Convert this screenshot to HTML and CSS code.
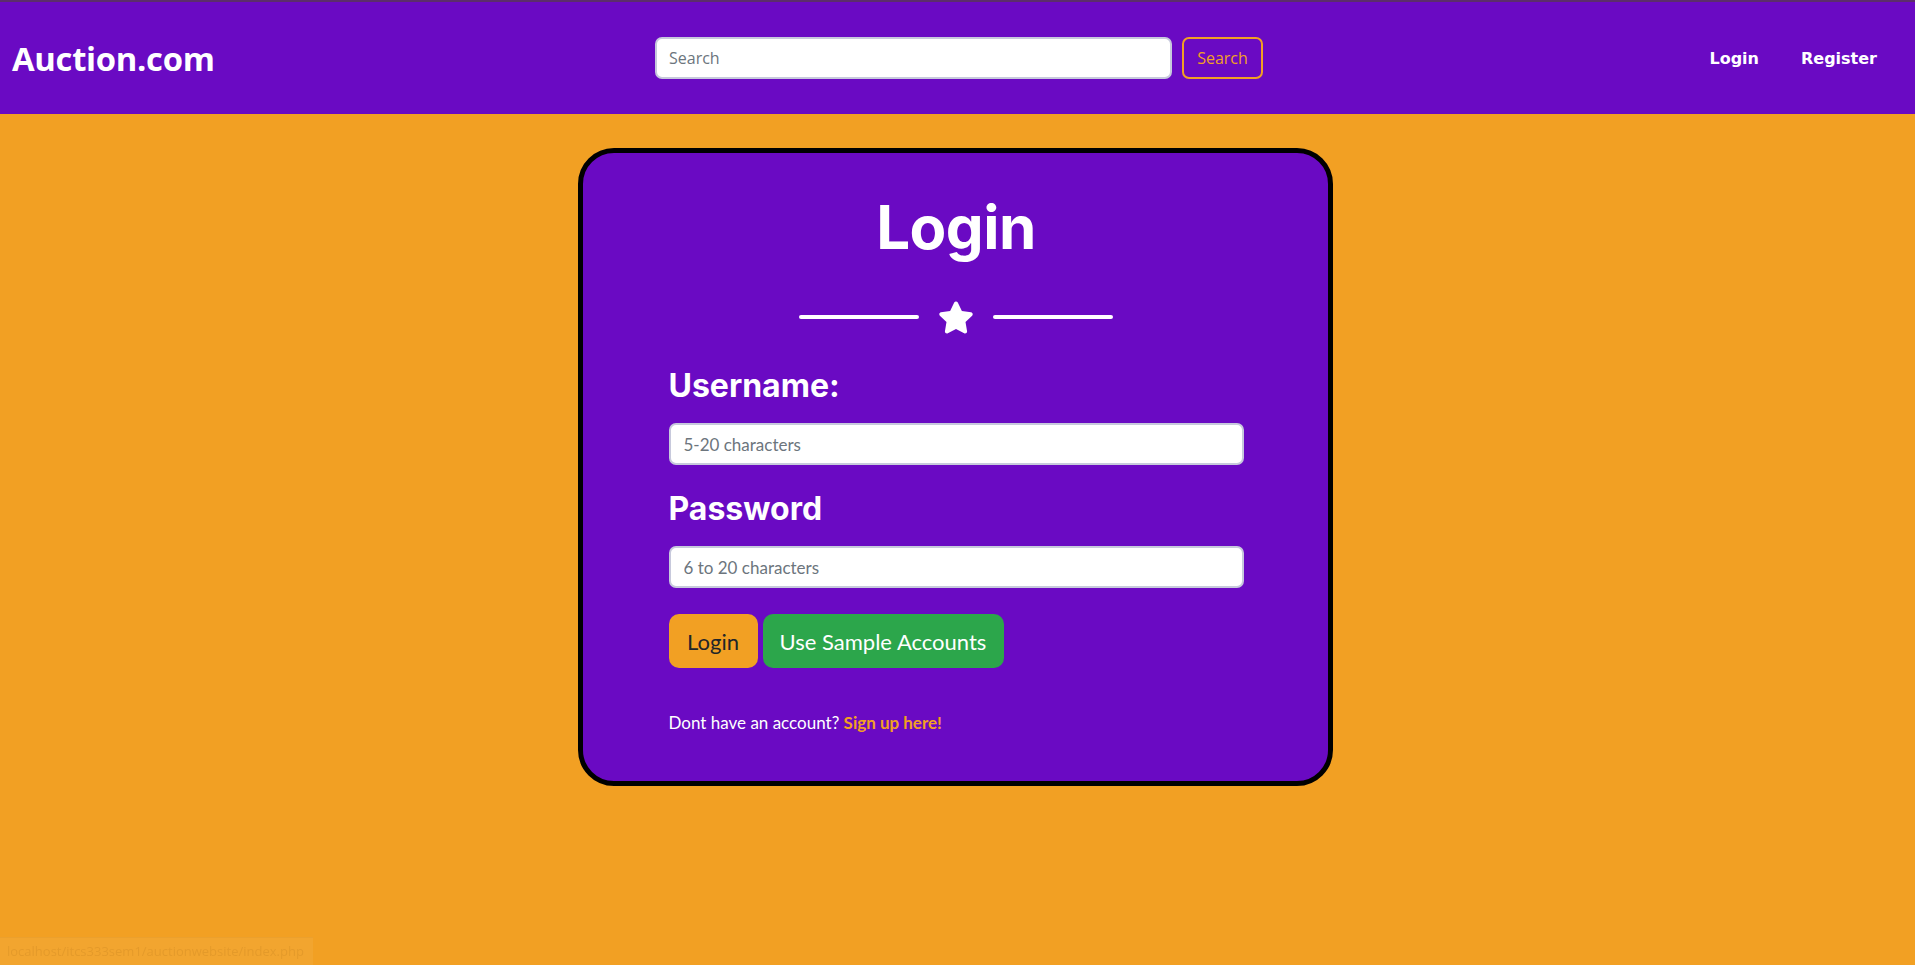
FILE: index.html
```html
<!DOCTYPE html>
<html lang="en">
<head>
<meta charset="utf-8">
<title>Login - Auction.com</title>
<link rel="stylesheet" href="styles.css">
</head>
<body>
<nav class="navbar">
  <a class="brand" href="#">Auction.com</a>
  <form class="search">
    <input class="search-input" type="text" placeholder="Search">
    <button class="search-btn" type="button">Search</button>
  </form>
  <div class="nav-links">
    <a href="#">Login</a>
    <a href="#">Register</a>
  </div>
</nav>

<main class="page">
  <section class="card">
    <h1 class="title">Login</h1>
    <div class="divider">
      <span class="line"></span>
      <svg class="star" viewBox="0 0 576 512" width="36" height="33"><path fill="#fff" d="M259.3 17.8L194 150.2 47.9 171.5c-26.2 3.8-36.7 36.1-17.7 54.6l105.7 103-25 145.5c-4.5 26.3 23.2 46 46.4 33.7L288 439.6l130.7 68.7c23.2 12.2 50.9-7.4 46.4-33.7l-25-145.5 105.7-103c19-18.5 8.5-50.8-17.7-54.6L382 150.2 316.7 17.8c-11.7-23.6-45.6-23.9-57.4 0z"/></svg>
      <span class="line"></span>
    </div>
    <form class="form">
      <label class="label" for="u">Username:</label>
      <input class="field" id="u" type="text" placeholder="5-20 characters">
      <label class="label" for="p">Password</label>
      <input class="field" id="p" type="password" placeholder="6 to 20 characters">
      <div class="actions">
        <button class="btn btn-orange" type="button">Login</button>
        <button class="btn btn-green" type="button">Use Sample Accounts</button>
      </div>
      <p class="signup">Dont have an account? <a href="#">Sign up here!</a></p>
    </form>
  </section>
</main>

<div class="status">localhost/itcs333sem1/auctionwebsite/index.php</div>
</body>
</html>
```

FILE: styles.css
```css
* { box-sizing: border-box; }
html, body { height: 100%; }
body {
  margin: 0;
  background: #f2a023;
  font-family: Lato, "Open Sans", sans-serif;
  color: #fff;
}
.navbar {
  height: 114px;
  background: #6a0ac3;
  border-top: 2px solid #5c2d6b;
  display: grid;
  grid-template-columns: 1fr auto 1fr;
  align-items: center;
  padding: 0 12px;
}
.brand {
  font-family: "Open Sans", sans-serif;
  font-weight: 700;
  font-size: 32.8px;
  color: #fff;
  text-decoration: none;
  justify-self: start;
  letter-spacing: -0.3px;
}
.search {
  display: flex;
  gap: 10px;
  margin: 0 0 0 3px;
}
.search-input {
  width: 517px;
  height: 42px;
  border: 2px solid #c7c9dc;
  border-radius: 7px;
  padding: 0 12px;
  font-family: "Open Sans", sans-serif;
  font-size: 16px;
  color: #495057;
  background: #fff;
  outline: none;
}
.search-input::placeholder { color: #6c757d; }
.search-btn {
  width: 81px;
  height: 42px;
  border: 2px solid #f2a023;
  border-radius: 7px;
  background: transparent;
  color: #f2a023;
  font-family: "Open Sans", sans-serif;
  font-size: 16px;
  padding: 0;
}
.nav-links {
  justify-self: end;
  display: flex;
  gap: 42px;
  margin-right: 26px;
}
.nav-links a {
  font-family: "DejaVu Sans", sans-serif;
  font-weight: 700;
  font-size: 16px;
  color: #fff;
  text-decoration: none;
}
.page {
  display: flex;
  justify-content: center;
  padding: 34px 5px 0 0;
}
.card {
  width: 755px;
  height: 638px;
  background: #6a0ac3;
  border: 5px solid #000;
  border-radius: 36px;
  padding: 0 84px 0 86px;
}
.title {
  margin: 38px 0 0;
  text-align: center;
  font-family: Inter, sans-serif;
  font-weight: 700;
  font-size: 60px;
  line-height: 72px;
  letter-spacing: -0.5px;
}
.divider {
  display: flex;
  justify-content: center;
  align-items: center;
  gap: 19px;
  margin-top: 36px;
  height: 36px;
}
.line {
  width: 120px;
  height: 4px;
  background: #fff;
  border-radius: 2px;
}
.star { display: block; }
.form {
  display: flex;
  flex-direction: column;
  margin-top: 31px;
}
.label {
  font-family: Inter, sans-serif;
  font-weight: 700;
  font-size: 32px;
  line-height: 40px;
}
.field {
  height: 42px;
  margin: 17px 0 24px;
  border: 2px solid #c7c9dc;
  border-radius: 7px;
  padding: 0 13px;
  font-family: Lato, sans-serif;
  font-size: 17px;
  color: #495057;
  background: #fff;
  outline: none;
}
.field::placeholder { color: #6c757d; }
.actions {
  display: flex;
  gap: 5px;
  margin-top: 2px;
}
.btn {
  height: 54px;
  border: none;
  border-radius: 10px;
  font-family: Lato, sans-serif;
  font-size: 22px;
  padding: 0;
}
.btn-orange { background: #f2a023; color: #212529; width: 89px; }
.btn-green { background: #2ca64b; color: #fff; width: 241px; }
.signup {
  margin: 43px 0 0;
  font-size: 17px;
  line-height: 24px;
}
.signup a {
  color: #f2a023;
  font-weight: 700;
  text-decoration: none;
}
.status {
  position: fixed;
  left: 0;
  bottom: 0;
  width: 313px;
  height: 28px;
  padding: 4px 7px;
  background: rgba(255,255,255,0.06);
  border-top: 1px solid rgba(0,0,0,0.03);
  color: rgba(120,70,0,0.12);
  font-family: "Open Sans", sans-serif;
  font-size: 13px;
  white-space: nowrap;
}
```
